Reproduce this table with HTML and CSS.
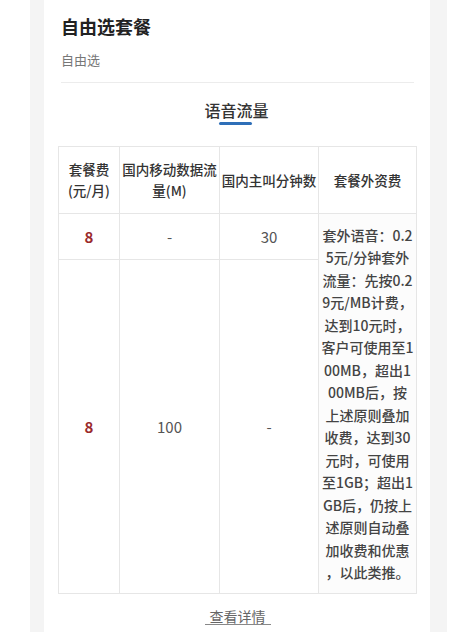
FILE: index.html
```html
<!DOCTYPE html>
<html lang="zh-CN">
<head>
<meta charset="utf-8">
<title>自由选套餐</title>
<link rel="stylesheet" href="styles.css">
</head>
<body>
<div class="frame">
  <div class="card">
    <h1 class="title">自由选套餐</h1>
    <p class="subtitle">自由选</p>
    <div class="divider"></div>
    <div class="tabs">
      <span class="tab">语音流量</span>
    </div>
    <div class="grid">
      <div class="cell head">套餐费<br>(元/月)</div>
      <div class="cell head">国内移动数据流<br>量(M)</div>
      <div class="cell head">国内主叫分钟数</div>
      <div class="cell head">套餐外资费</div>

      <div class="cell price">8</div>
      <div class="cell val">-</div>
      <div class="cell val">30</div>
      <div class="cell extra">套外语音：0.2<br>5元/分钟套外<br>流量：先按0.2<br>9元/MB计费，<br>达到10元时，<br>客户可使用至1<br>00MB，超出1<br>00MB后，按<br>上述原则叠加<br>收费，达到30<br>元时，可使用<br>至1GB；超出1<br>GB后，仍按上<br>述原则自动叠<br>加收费和优惠<br>，以此类推。</div>

      <div class="cell price">8</div>
      <div class="cell val">100</div>
      <div class="cell val">-</div>
    </div>
    <div class="more">
      <span class="more-link">查看详情</span>
    </div>
  </div>
</div>
</body>
</html>
```

FILE: styles.css
```css
* { box-sizing: border-box; }
html, body {
  margin: 0;
  padding: 0;
  background: #ffffff;
  font-family: "Noto Sans CJK SC", "Noto Sans", "Liberation Sans", sans-serif;
  color: #333;
}
.frame {
  margin-left: 30px;
  width: 417px;
  height: 632px;
  background: #f4f4f4;
  padding: 0 17px 0 14px;
  overflow: hidden;
}
.card {
  background: #ffffff;
  height: 632px;
  padding: 13px 14px 0 17px;
}
.title {
  margin: 0;
  font-size: 18px;
  line-height: 26px;
  font-weight: 700;
  color: #222;
}
.subtitle {
  margin: 11px 0 0;
  font-size: 13px;
  line-height: 20px;
  color: #777;
}
.divider {
  margin: 12px 2px 0 0;
  height: 1px;
  background: #ececec;
}
.tabs {
  margin: 16px 0 0 -3px;
  width: 359px;
  display: flex;
  justify-content: center;
}
.tab {
  display: block;
  position: relative;
  font-size: 16px;
  line-height: 22px;
  font-weight: 500;
  color: #333;
  padding-bottom: 4px;
  margin-left: -2px;
}
.tab::after {
  content: "";
  position: absolute;
  left: 50%;
  bottom: 0;
  width: 33px;
  height: 3px;
  margin-left: -17px;
  border-radius: 2px;
  background: #2f6fb8;
}
.grid {
  margin: 21px 0 0 -3px;
  width: 359px;
  display: grid;
  grid-template-columns: 60px 99px 98px 97px;
  grid-template-rows: 66px 45px 333px;
  gap: 1px;
  padding: 1px;
  background: #e6e6e6;
}
.cell {
  background: #ffffff;
  display: flex;
  align-items: center;
  justify-content: center;
  text-align: center;
  font-size: 14px;
  color: #555;
}
.head {
  font-size: 13.5px;
  line-height: 21px;
  font-weight: 500;
  color: #333;
  padding: 0 1px;
  white-space: nowrap;
}
.price {
  color: #9b2b2b;
  font-weight: 700;
  font-size: 15px;
}
.val {
  font-size: 15px;
  color: #555;
}
.extra {
  grid-column: 4;
  grid-row: 2 / 4;
  font-size: 14px;
  line-height: 22.5px;
  font-weight: 500;
  color: #444;
  white-space: nowrap;
  background: #fcfcfc;
}
.more {
  margin: 14px 0 0 -3px;
  width: 359px;
  display: flex;
  justify-content: center;
}
.more-link {
  display: block;
  font-size: 14px;
  line-height: 16px;
  color: #666;
  padding: 0 5px;
  border-bottom: 1px solid #888;
}
```
